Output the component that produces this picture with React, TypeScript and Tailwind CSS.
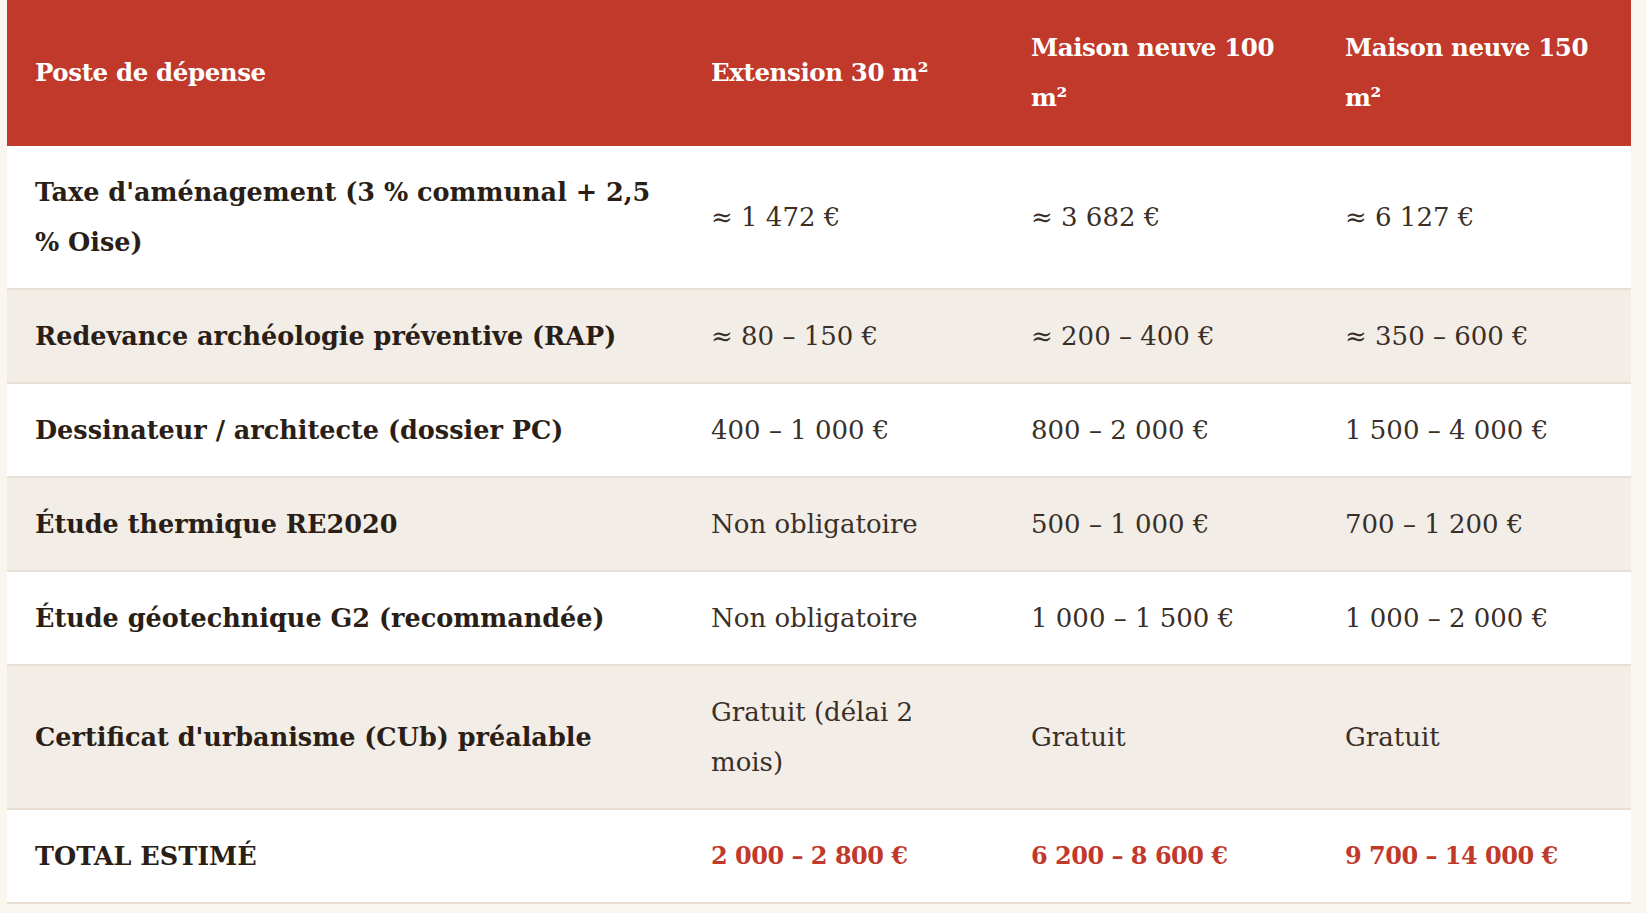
import React from "react";

type Row = {
  label: string;
  ext: string;
  m100: string;
  m150: string;
  total?: boolean;
};

const rows: Row[] = [
  { label: "Taxe d'aménagement (3 % communal + 2,5 % Oise)", ext: "≈ 1 472 €", m100: "≈ 3 682 €", m150: "≈ 6 127 €" },
  { label: "Redevance archéologie préventive (RAP)", ext: "≈ 80 – 150 €", m100: "≈ 200 – 400 €", m150: "≈ 350 – 600 €" },
  { label: "Dessinateur / architecte (dossier PC)", ext: "400 – 1 000 €", m100: "800 – 2 000 €", m150: "1 500 – 4 000 €" },
  { label: "Étude thermique RE2020", ext: "Non obligatoire", m100: "500 – 1 000 €", m150: "700 – 1 200 €" },
  { label: "Étude géotechnique G2 (recommandée)", ext: "Non obligatoire", m100: "1 000 – 1 500 €", m150: "1 000 – 2 000 €" },
  { label: "Certificat d'urbanisme (CUb) préalable", ext: "Gratuit (délai 2 mois)", m100: "Gratuit", m150: "Gratuit" },
  { label: "TOTAL ESTIMÉ", ext: "2 000 – 2 800 €", m100: "6 200 – 8 600 €", m150: "9 700 – 14 000 €", total: true },
];

const cell = "px-[28px] py-[21px] align-middle text-left";
const head = "px-[28px] py-[23px] text-left align-middle font-bold";

export default function App() {
  return (
    <div className="min-h-[913px] w-full bg-[#f9f6f0] pl-[7px] font-['DejaVu_Serif',serif] leading-[50px] text-[#2a1e16]">
      <table className="w-[1624px] table-fixed border-collapse">
        <colgroup>
          <col className="w-[676px]" />
          <col className="w-[320px]" />
          <col className="w-[314px]" />
          <col className="w-[314px]" />
        </colgroup>
        <thead>
          <tr className="bg-[#c0392b] text-[24.5px] tracking-[-0.4px] text-white">
            <th className={head}>Poste de dépense</th>
            <th className={head}>Extension 30 m²</th>
            <th className={head}>Maison neuve 100 m²</th>
            <th className={head}>Maison neuve 150 m²</th>
          </tr>
        </thead>
        <tbody>
          {rows.map((r, i) => (
            <tr
              key={r.label}
              className={`border-b-2 border-[#e9ded4] ${i % 2 === 1 ? "bg-[#f2ede7]" : "bg-white"}`}
            >
              <td className={`${cell} text-[25.5px] font-bold`}>{r.label}</td>
              <td className={`${cell} ${r.total ? "text-[24px] font-bold tracking-[-0.5px] text-[#c0392b]" : "text-[26px] text-[#3a2f27]"}`}>{r.ext}</td>
              <td className={`${cell} ${r.total ? "text-[24px] font-bold tracking-[-0.5px] text-[#c0392b]" : "text-[26px] text-[#3a2f27]"}`}>{r.m100}</td>
              <td className={`${cell} ${r.total ? "text-[24px] font-bold tracking-[-0.5px] text-[#c0392b]" : "text-[26px] text-[#3a2f27]"}`}>{r.m150}</td>
            </tr>
          ))}
        </tbody>
      </table>
    </div>
  );
}
